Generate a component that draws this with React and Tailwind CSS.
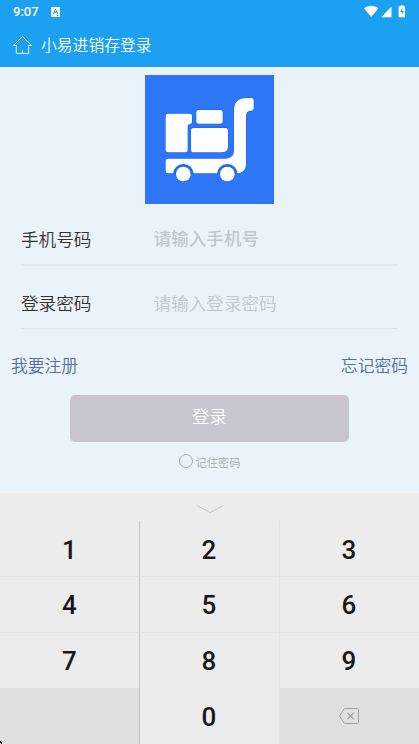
import React, { useState } from 'react';

const keys = ['1', '2', '3', '4', '5', '6', '7', '8', '9', '', '0', 'delete'];

const fields = [
  {
    id: 'phone',
    label: '手机号码',
    placeholder: '请输入手机号',
    type: 'tel',
    rowClass: 'h-[62px] pt-[18px] border-b-2 border-[#e3e8ea]',
    inputClass: 'font-medium -mt-0.5',
  },
  {
    id: 'password',
    label: '登录密码',
    placeholder: '请输入登录密码',
    type: 'password',
    rowClass: 'h-[63px] pt-[20px] border-b border-[#dfe3e6]',
    inputClass: 'font-[350] -mt-px',
  },
];

const StatusBar = () => (
  <div className="flex h-[23px] items-center pl-[13px] pr-[13px] text-white">
    <span className="w-[26px] font-[Roboto] text-[13px] font-medium leading-[23px]">9:07</span>
    <svg className="ml-3 h-[10px] w-[9px]" viewBox="0 0 9 10">
      <rect width="9" height="10" rx="1" fill="#fff" />
      <path d="M2.3 7 4.5 2.2 6.7 7M3.1 5.5h2.8M6 8.5h1.5" fill="none" stroke="#1ca0f2" strokeWidth="1" />
    </svg>
    <svg className="ml-auto h-[13px] w-[42px]" viewBox="0 0 42 13">
      <path d="M0 3.3C4.2-.1 10.200-.1 14.400 3.300L7.200 12z" fill="#fff" />
      <path d="M27.500 1.500V12.300H17.200z" fill="#fff" />
      <path d="M36.800 0h2.600v1.200h1.600V12.300h-6.400V1.200h2.200z" fill="#fff" />
      <path d="m38.300 3-2 4h1.500v3l2-4h-1.500z" fill="#1ca0f2" />
    </svg>
  </div>
);

const HomeIcon = () => (
  <svg className="h-[18px] w-[19px]" viewBox="0 0 19 18" fill="none" stroke="#fff" strokeWidth="1">
    <path
      d="M.6 9.300 9.500.7l8.900 8.600h-2.700v8.100H3.300V9.300zM9.500 14.200v3.200"
      strokeOpacity=".85"
      strokeLinejoin="round"
    />
  </svg>
);

const Logo = () => (
  <svg className="h-[129px] w-[129px]" viewBox="15 15 387 387">
    <rect x="15" y="15" width="387" height="387" fill="#2d76f8" />
    <g fill="#fff" stroke="#1265f5" strokeWidth="3" paintOrder="stroke">
      <path d="M84 131h65q7 0 7 7v17q0 7-7 7-6 1-6 7v71q0 7-7 7H84q-7 0-7-7v-102q0-7 7-7z" />
      <rect x="169" y="120" width="79" height="41" rx="7" />
      <path d="M161 174h95q8 0 8 8v46q0 19-19 19h-84q-8 0-8-8v-57q0-8 8-8z" />
      <path d="M84 266h173q25 0 25-25V121q0-37 40-37h12q7 0 7 7v24q0 7-7 7-16 0-16 16v145q0 20-20 27H84q-7 0-7-7v-30q0-7 7-7z" />
    </g>
    <path d="M99 313a31 31 0 0 1 62 0zM231 313a31 31 0 0 1 62 0z" fill="#1b6bf6" />
    <g fill="#fff">
      <circle cx="130" cy="312" r="22" />
      <circle cx="262" cy="312" r="22" />
    </g>
  </svg>
);

const DeleteIcon = () => (
  <svg className="-ml-px -mt-[3px] h-4 w-5" viewBox="0 0 20 16" fill="none" stroke="#a0a0a0" strokeWidth="1">
    <path d="M6 .5h12.500q1 0 1 1v13q0 1-1 1H6Q5.500 15.500 5 14.800L.6 8 5 1.200Q5.500.5 6 .5z" />
    <path d="m8.600 5 6 6m0-6-6 6" strokeWidth="1.200" />
  </svg>
);

const Keypad = ({ onPress }) => (
  <div className="relative h-[251px] bg-[#ececec]">
    <div className="flex h-7 justify-center pt-3">
      <svg className="h-2 w-7" viewBox="0 0 28 8" fill="none" stroke="#c4c4c4">
        <path d="M.8.600 14 7.400 27.200.600" />
      </svg>
    </div>
    <div className="grid h-[223px] grid-cols-[140px_140px_139px] grid-rows-[56px_56px_55px_56px]">
      {keys.map((key, index) => {
        const isGray = key === '' || key === 'delete';
        const border = ['border-r border-r-[#c3c3c3]', 'border-r border-r-[#e2e2e2] pr-px', 'pr-px'][index % 3];
        const offset = index > 2 && index < 9 ? 'pt-0' : 'pt-0.5';
        return (
          <button
            key={index}
            type="button"
            onClick={() => onPress(key)}
            className={`flex items-center justify-center font-[Roboto] text-[26px] font-medium leading-none text-[#191919] ${offset} ${border} ${index < 6 ? 'border-b border-b-[#e5e5e5]' : ''} ${isGray ? 'bg-[#dfdfdf]' : ''}`}
          >
            {key === 'delete' ? <DeleteIcon /> : key}
          </button>
        );
      })}
    </div>
    <svg className="absolute bottom-0 left-0 h-[3px] w-[2px]" viewBox="0 0 2 3">
      <path d="M0 0h1v1h1v2H1V2H0z" fill="#111" />
    </svg>
  </div>
);

const App = () => {
  const [values, setValues] = useState({ phone: '', password: '' });
  const [active, setActive] = useState('phone');
  const [remember, setRemember] = useState(false);

  const handlePress = (key) => {
    setValues((prev) => ({
      ...prev,
      [active]: key === 'delete' ? prev[active].slice(0, -1) : prev[active] + key,
    }));
  };

  return (
    <div className="flex h-[744px] w-[419px] flex-col overflow-hidden bg-[#ebf3fa] font-['Noto_Sans_CJK_SC',sans-serif] font-[350]">
      <header className="h-[67px] shrink-0 bg-[#1ca0f2]">
        <StatusBar />
        <div className="flex h-11 items-center gap-[9px] pl-[13px]">
          <HomeIcon />
          <h1 className="text-[15.800px] font-[350] leading-none text-white">小易进销存登录</h1>
        </div>
      </header>

      <main className="flex-1">
        <div className="flex justify-center pt-2">
          <Logo />
        </div>

        <form className="mx-[21px]">
          {fields.map((field) => (
            <div key={field.id} className={`flex ${field.rowClass}`}>
              <label htmlFor={field.id} className="w-[132.500px] text-[17.600px] leading-[34px] text-[#333]">
                {field.label}
              </label>
              <input
                id={field.id}
                type={field.type}
                value={values[field.id]}
                placeholder={field.placeholder}
                onFocus={() => setActive(field.id)}
                onChange={(e) => setValues({ ...values, [field.id]: e.target.value })}
                className={`h-[34px] min-w-0 flex-1 text-[17.600px] text-[#333] outline-none placeholder:text-[#bfc8d2] ${field.inputClass}`}
              />
            </div>
          ))}
        </form>

        <div className="flex justify-between px-[11px] pt-[23px] text-[16.800px] leading-[26px] text-[#586c9f]">
          <a href="#register">我要注册</a>
          <a href="#forgot">忘记密码</a>
        </div>

        <button
          type="button"
          className="mx-[70px] mt-[17px] block h-[47px] w-[279px] rounded-[5px] bg-[#c7c6d0] pb-1 text-[17.500px] text-white"
        >
          登录
        </button>

        <button
          type="button"
          onClick={() => setRemember(!remember)}
          className="mx-auto mt-3 flex items-center gap-[3px] text-[11.200px] leading-[16px] text-[#a4acad]"
        >
          <span className={`-mt-0.5 h-[14px] w-[14px] rounded-full border border-[#a4acad] ${remember ? 'bg-[#1ca0f2]' : ''}`} />
          记住密码
        </button>
      </main>

      <Keypad onPress={handlePress} />
    </div>
  );
};

export default App;
